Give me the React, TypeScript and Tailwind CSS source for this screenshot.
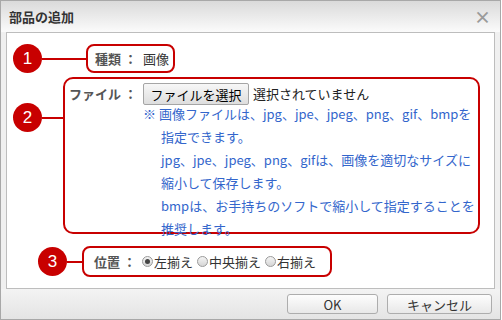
import React from 'react';

const RED = 'bg-[#c80000]';

const Badge = ({ n }: { n: number }) => (
  <div className={`w-[29px] h-[29px] shrink-0 rounded-full ${RED} text-white flex items-center justify-center text-[17px] leading-none font-['Liberation_Sans',sans-serif]`}>
    {n}
  </div>
);

const Radio = ({ checked, label }: { checked?: boolean; label: string }) => (
  <span className="flex items-center">
    <span className="w-[11px] h-[11px] rounded-full border border-[#9a9a9a] bg-linear-to-b from-[#f4f4f4] to-[#d6d6d6] flex items-center justify-center">
      {checked && <span className="w-[5px] h-[5px] rounded-full bg-[#444]" />}
    </span>
    <span className="ml-[1px] text-[#333]">{label}</span>
  </span>
);

const Label = ({ text, w }: { text: string; w: string }) => (
  <span className={`${w} shrink-0 text-right font-bold text-[#555] whitespace-nowrap`}>
    {text} ：
  </span>
);

export default function App() {
  return (
    <div className="w-[502px] h-[320px] bg-white font-['Noto_Sans_CJK_JP',sans-serif] text-[13px]">
      <div className="w-[501px] h-[320px] border border-[#a8a8a8] bg-[#f0f0f0] flex flex-col">
        {/* title bar */}
        <div className="h-[31px] shrink-0 bg-linear-to-b from-[#dadada] to-[#fbfbfb] flex items-center justify-between pl-[8px] pr-[9px]">
          <span className="font-bold text-[13px] text-[#333]">部品の追加</span>
          <span className="text-[#9a9a9a] text-[17px] font-bold leading-none">×</span>
        </div>

        {/* body */}
        <div className="mx-[5px] h-[257px] shrink-0 border border-[#bdbdbd] bg-white pt-[11px]">
          {/* kind */}
          <div className="flex items-center ml-[6px] h-[29px]">
            <Badge n={1} />
            <div className={`w-[44px] h-[2px] ${RED}`} />
            <div className="w-[89px] h-[29px] border-2 border-[#c80000] rounded-[8px] flex items-center">
              <Label text="種類" w="w-[49px]" />
              <span className="ml-[6px] text-[#333]">画像</span>
            </div>
          </div>

          {/* file */}
          <div className="flex items-start ml-[6px] mt-[4px]">
            <div className="flex items-center mt-[26px]">
              <Badge n={2} />
              <div className={`w-[21px] h-[2px] ${RED}`} />
            </div>
            <div className="w-[417px] h-[157px] border-2 border-[#c80000] rounded-[10px] pt-[4px]">
              <div className="flex items-center h-[22px]">
                <Label text="ファイル" w="w-[72px]" />
                <button className="ml-[6px] w-[106px] h-[22px] border border-[#a5a5a5] rounded-[2px] bg-linear-to-b from-[#f7f7f7] to-[#dedede] text-black text-[13px] leading-none">
                  ファイルを選択
                </button>
                <span className="ml-[4px] text-[#222]">選択されていません</span>
              </div>
              <div className="mt-[-3px] pl-[78px] leading-[23px] text-[#3366cc] whitespace-nowrap">
                <div>※ 画像ファイルは、jpg、jpe、jpeg、png、gif、bmpを</div>
                <div className="pl-[18px]">
                  <div>指定できます。</div>
                  <div>jpg、jpe、jpeg、png、gifは、画像を適切なサイズに</div>
                  <div>縮小して保存します。</div>
                  <div>bmpは、お手持ちのソフトで縮小して指定することを</div>
                  <div>推奨します。</div>
                </div>
              </div>
            </div>
          </div>

          {/* position */}
          <div className="flex items-center ml-[31px] mt-[12px]">
            <Badge n={3} />
            <div className={`w-[15px] h-[2px] ${RED}`} />
            <div className="w-[250px] h-[31px] border-2 border-[#c80000] rounded-[8px] flex items-center">
              <Label text="位置" w="w-[52px]" />
              <div className="ml-[6px] flex items-center gap-[4px]">
                <Radio checked label="左揃え" />
                <Radio label="中央揃え" />
                <Radio label="右揃え" />
              </div>
            </div>
          </div>
        </div>

        {/* footer */}
        <div className="flex-1 bg-linear-to-b from-[#f3f3f3] to-[#e4e4e4] flex justify-end items-start pt-[5px] pr-[8px] gap-[9px]">
          <button className="w-[91px] h-[20px] border border-[#adadad] rounded-[3px] bg-linear-to-b from-[#fdfdfd] to-[#e8e8e8] text-[#333] text-[13px] leading-none">
            OK
          </button>
          <button className="w-[105px] h-[20px] border border-[#adadad] rounded-[3px] bg-linear-to-b from-[#fdfdfd] to-[#e8e8e8] text-[#333] text-[13px] leading-none">
            キャンセル
          </button>
        </div>
      </div>
    </div>
  );
}
